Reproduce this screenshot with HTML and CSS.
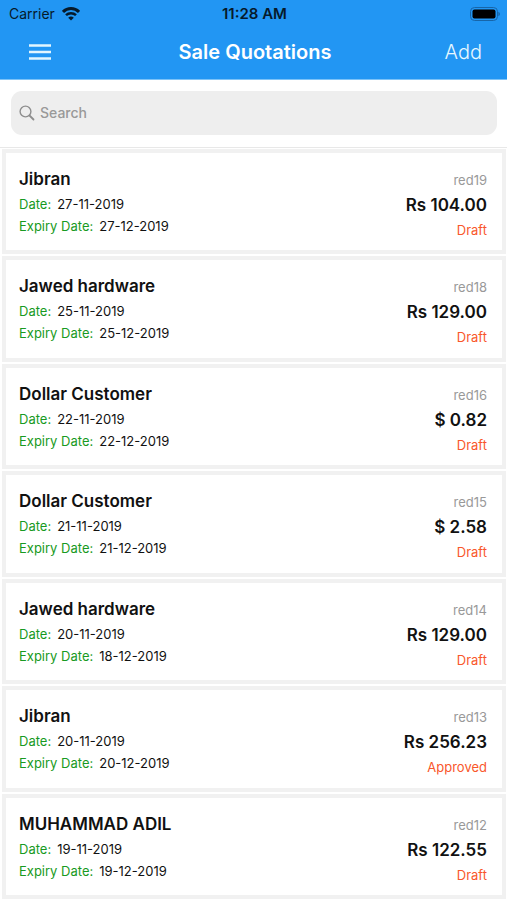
FILE: index.html
```html
<!DOCTYPE html>
<html lang="en">
<head>
<meta charset="utf-8">
<meta name="viewport" content="width=device-width, initial-scale=1">
<title>Sale Quotations</title>
<link rel="stylesheet" href="styles.css">
</head>
<body>
<header class="top">
  <div class="status">
    <div class="carrier">
      <span>Carrier</span>
      <svg class="wifi" viewBox="0 0 18 14" aria-hidden="true">
        <path d="M1 4.9a11.4 11.4 0 0 1 16 0" fill="none" stroke="#061a2b" stroke-width="3"/>
        <path d="M4 8.2a7.2 7.2 0 0 1 10 0" fill="none" stroke="#061a2b" stroke-width="2.5"/>
        <path d="M9 13.6 6.2 10.7a4.1 4.1 0 0 1 5.6 0z" fill="#061a2b"/>
      </svg>
    </div>
    <span class="time">11:28 AM</span>
    <svg class="battery" viewBox="0 0 30 14" aria-hidden="true">
      <rect x="0.5" y="0.5" width="27" height="13" rx="4" fill="none" stroke="#1765a8"/>
      <rect x="2.5" y="2.5" width="23" height="9" rx="2" fill="#000"/>
      <path d="M28.4 4.8c2 .8 2 3.6 0 4.4z" fill="#1765a8"/>
    </svg>
  </div>
  <nav class="nav">
    <button class="menu" type="button" aria-label="Menu">
      <svg viewBox="0 0 22 16" aria-hidden="true"><path d="M0 1.5h22M0 8h22M0 14.5h22" stroke="#e2f6ff" stroke-width="2.4"/></svg>
    </button>
    <h1>Sale Quotations</h1>
    <button class="add" type="button">Add</button>
  </nav>
</header>
<div class="search-bar">
  <label class="search">
    <svg viewBox="0 0 16 16" aria-hidden="true"><circle cx="6.5" cy="6.5" r="5.4" fill="none" stroke="#8e8e8e" stroke-width="1.4"/><path d="m10.5 10.5 4 4" stroke="#8e8e8e" stroke-width="1.8" stroke-linecap="round"/></svg>
    <input type="search" placeholder="Search" aria-label="Search">
  </label>
</div>
<ul class="list">
  <li class="card">
    <div class="info"><h2>Jibran</h2><p><span class="label">Date:</span>27-11-2019</p><p><span class="label">Expiry Date:</span>27-12-2019</p></div>
    <div class="sum"><span class="ref">red19</span><strong>Rs 104.00</strong><span class="state">Draft</span></div>
  </li>
  <li class="card">
    <div class="info"><h2>Jawed hardware</h2><p><span class="label">Date:</span>25-11-2019</p><p><span class="label">Expiry Date:</span>25-12-2019</p></div>
    <div class="sum"><span class="ref">red18</span><strong>Rs 129.00</strong><span class="state">Draft</span></div>
  </li>
  <li class="card">
    <div class="info"><h2>Dollar Customer</h2><p><span class="label">Date:</span>22-11-2019</p><p><span class="label">Expiry Date:</span>22-12-2019</p></div>
    <div class="sum"><span class="ref">red16</span><strong>$ 0.82</strong><span class="state">Draft</span></div>
  </li>
  <li class="card">
    <div class="info"><h2>Dollar Customer</h2><p><span class="label">Date:</span>21-11-2019</p><p><span class="label">Expiry Date:</span>21-12-2019</p></div>
    <div class="sum"><span class="ref">red15</span><strong>$ 2.58</strong><span class="state">Draft</span></div>
  </li>
  <li class="card">
    <div class="info"><h2>Jawed hardware</h2><p><span class="label">Date:</span>20-11-2019</p><p><span class="label">Expiry Date:</span>18-12-2019</p></div>
    <div class="sum"><span class="ref">red14</span><strong>Rs 129.00</strong><span class="state">Draft</span></div>
  </li>
  <li class="card">
    <div class="info"><h2>Jibran</h2><p><span class="label">Date:</span>20-11-2019</p><p><span class="label">Expiry Date:</span>20-12-2019</p></div>
    <div class="sum"><span class="ref">red13</span><strong>Rs 256.23</strong><span class="state">Approved</span></div>
  </li>
  <li class="card">
    <div class="info"><h2>MUHAMMAD ADIL</h2><p><span class="label">Date:</span>19-11-2019</p><p><span class="label">Expiry Date:</span>19-12-2019</p></div>
    <div class="sum"><span class="ref">red12</span><strong>Rs 122.55</strong><span class="state">Draft</span></div>
  </li>
</ul>
</body>
</html>
```
FILE: styles.css
```css
* { box-sizing: border-box; margin: 0; padding: 0; }

body {
  display: flex;
  flex-direction: column;
  min-height: 100vh;
  background: #fff;
  color: #111;
  font-family: Inter, "Liberation Sans", sans-serif;
}

button, input { border: 0; background: none; font: inherit; }

.top {
  background: #2296f3;
  border-bottom: 1px solid #7cc3f8;
}

.status {
  display: grid;
  grid-template-columns: 1fr auto 1fr;
  align-items: center;
  height: 27px;
  padding: 0 7px 0 9px;
  color: #061a2b;
  font-size: 14px;
}

.carrier { display: flex; align-items: center; gap: 7px; }
.wifi { width: 18px; height: 14px; }
.time { font-size: 15px; font-weight: 600; }
.battery { width: 30px; height: 14px; justify-self: end; }

.nav {
  display: grid;
  grid-template-columns: 1fr auto 1fr;
  align-items: center;
  height: 52px;
  padding: 0 25px 2px 28px;
  color: #fff;
}

.nav h1 { font-size: 20px; font-weight: 600; line-height: 24px; }
.menu { justify-self: start; width: 24px; height: 16px; }
.menu svg { display: block; width: 24px; height: 16px; }
.add { justify-self: end; color: #e8f8ff; font-size: 20px; font-weight: 300; line-height: 24px; }

.search-bar {
  padding: 11px 10px 12px 11px;
  border-bottom: 1px solid #e8e8e8;
}

.search {
  display: flex;
  align-items: center;
  gap: 5px;
  height: 44px;
  padding: 0 8px 1px;
  border-radius: 11px;
  background: #eee;
}

.search svg { width: 16px; height: 16px; }
.search input { flex: 1; min-width: 0; outline: 0; font-size: 14px; font-weight: 500; }
.search input::placeholder { color: #999; }

.list {
  display: grid;
  flex: 1;
  grid-auto-rows: 1fr;
  gap: 2px;
  padding: 1px 1px 1px 2px;
  list-style: none;
}

.card {
  display: flex;
  justify-content: space-between;
  padding: 15px 15px 7px 13px;
  border: 4px solid #f1f1f1;
}

.info h2 { margin-bottom: 3px; font-size: 17px; font-weight: 600; line-height: 22px; }
.info p { font-size: 13px; line-height: 22px; }
.label { margin-right: 6px; color: #189a22; }

.sum { display: flex; flex-direction: column; align-items: flex-end; }
.ref { color: #999; font-size: 13px; line-height: 24px; }
.sum strong { font-size: 17px; font-weight: 600; line-height: 26px; }
.state { color: #f9572b; font-size: 13px; line-height: 24px; }
```
